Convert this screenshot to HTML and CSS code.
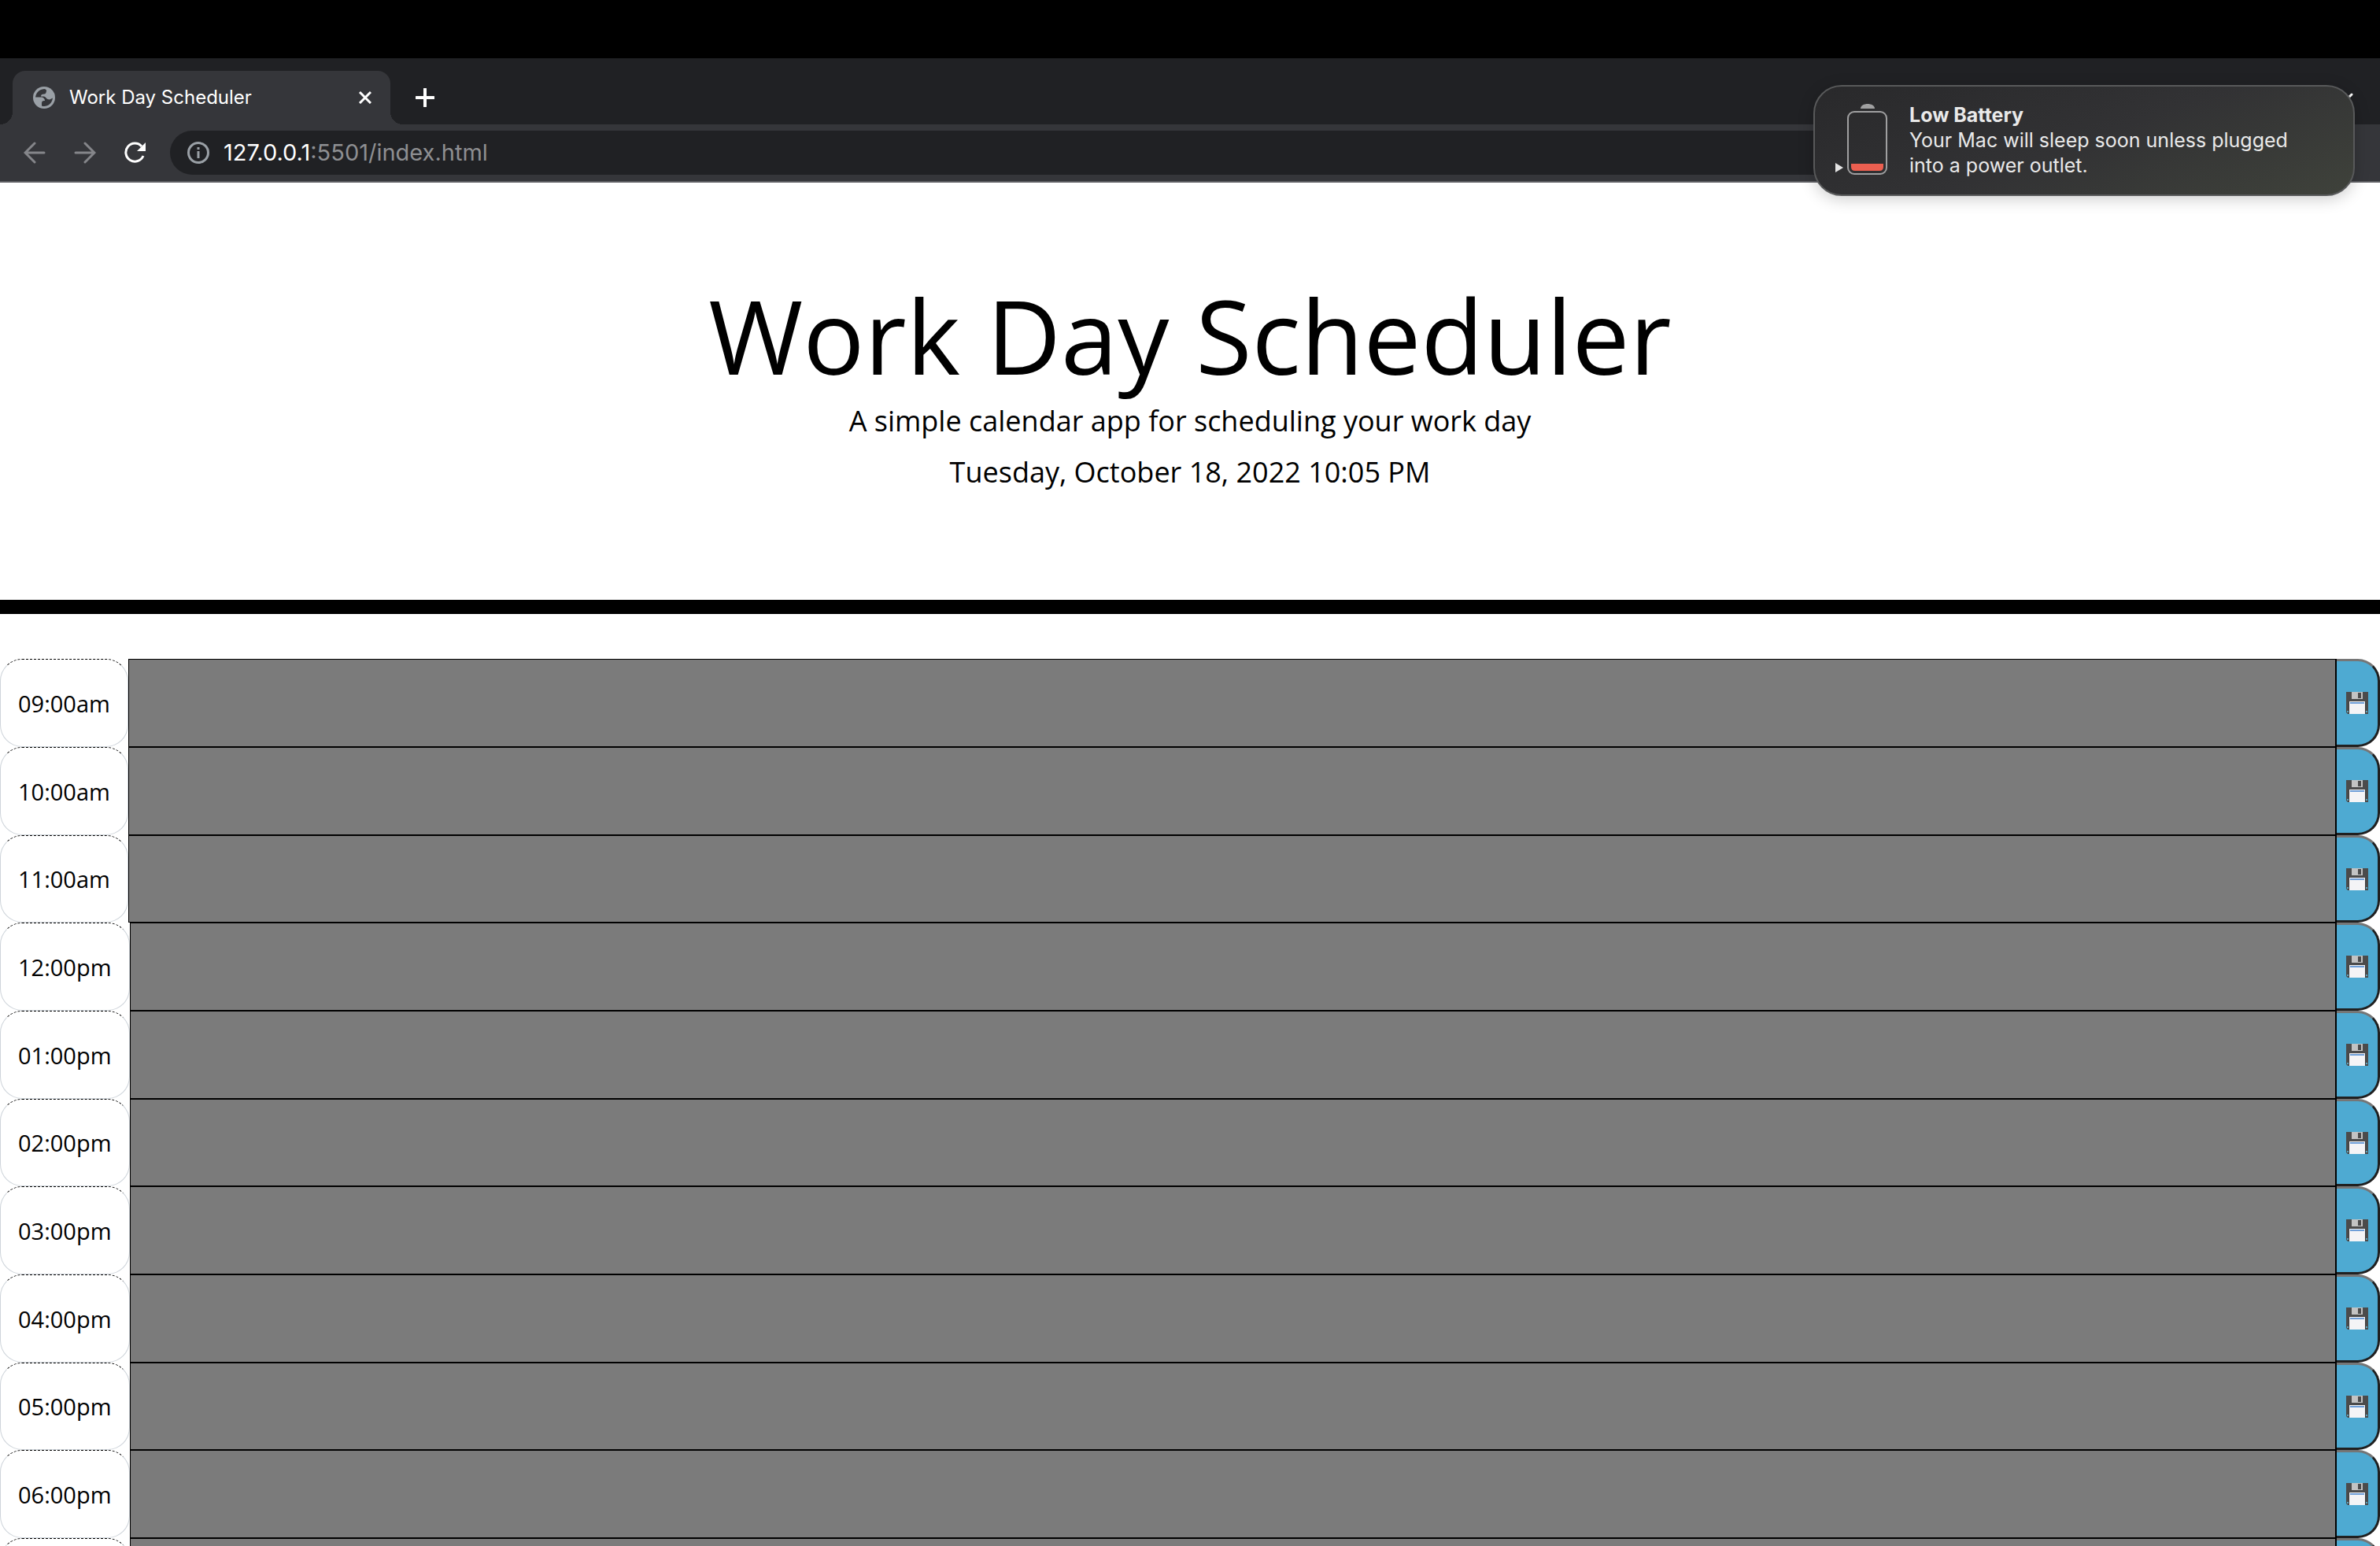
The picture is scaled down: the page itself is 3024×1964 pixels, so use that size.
FILE: index.html
```
<!DOCTYPE html>
<html lang="en">
<head>
<meta charset="utf-8">
<title>Work Day Scheduler</title>
<link rel="stylesheet" href="styles.css">
</head>
<body>
<svg width="0" height="0" class="sprite" aria-hidden="true">
  <symbol id="floppy" viewBox="0 0 28 28">
    <path d="M0 0h28v28H2L0 26z" fill="#4b4b4b"/>
    <path d="M7 0h14v9H7z" fill="#c3c3c3"/>
    <path d="M15 1h4v7h-4z" fill="#4b4b4b"/>
    <path d="M3 12h22v16H3z" fill="#3c3c3c"/>
    <path d="M4 12h20v16H4z" fill="#f4f4f6"/>
    <path d="M5 13h18v2H5z" fill="#6f9fd8"/>
    <path d="M1 24h2v2H1zM25 24h2v2h-2z" fill="#5ba3bd"/>
  </symbol>
</svg>

<header class="browser">
  <div class="menubar"></div>
  <div class="tabstrip">
    <div class="tab">
      <svg class="globe" viewBox="0 0 28 28"><circle cx="14" cy="14" r="14" fill="#9aa0a6"/><path d="M15 3C9 3 4 7 3 13.500h7c3 0 5 2 5 4.500h-1c-2 0-3 1-3 3v3.500c6 2 13-2 14-10l-4 2c-4 0-4-3-7-4h-4c0-2 1-3 4-3 2 0 3-2 3-5z" fill="#35363a"/></svg>
      <span class="tab-title">Work Day Scheduler</span>
      <button class="icon-button" type="button" aria-label="Close tab"><svg width="16" height="16" viewBox="0 0 16 16"><path d="M1 1l14 14M15 1L1 15" stroke="#fff" stroke-width="3"/></svg></button>
    </div>
    <button class="icon-button" type="button" aria-label="New tab"><svg width="24" height="24" viewBox="0 0 24 24"><path d="M12 1v22M1 12h22" stroke="#fff" stroke-width="4" stroke-linecap="round"/></svg></button>
    <button class="icon-button tab-search" type="button" aria-label="Search tabs"><svg width="20" height="12" viewBox="0 0 20 12"><path d="M2 2l8 8 8-8" fill="none" stroke="#fff" stroke-width="3" stroke-linecap="round"/></svg></button>
  </div>
  <div class="toolbar">
    <nav class="nav">
      <button class="icon-button" type="button" aria-label="Back"><svg width="28" height="28" viewBox="0 0 28 28"><path d="M26 14H3M14 2L2 14l12 12" fill="none" stroke="#85868a" stroke-width="3" stroke-linecap="round"/></svg></button>
      <button class="icon-button" type="button" aria-label="Forward"><svg width="28" height="28" viewBox="0 0 28 28"><path d="M2 14h23M14 2l12 12-12 12" fill="none" stroke="#85868a" stroke-width="3" stroke-linecap="round"/></svg></button>
      <button class="icon-button" type="button" aria-label="Reload"><svg width="28" height="28" viewBox="0 0 28 28"><path d="M24 18A11.500 11.500 0 1 1 22 6" fill="none" stroke="#fff" stroke-width="3"/><path d="M27 1v11H16z" fill="#fff"/></svg></button>
    </nav>
    <div class="omnibox">
      <svg width="28" height="28" viewBox="0 0 28 28"><circle cx="14" cy="14" r="12.500" fill="none" stroke="#9aa0a6" stroke-width="3"/><path d="M14 12v9M14 7v3" stroke="#9aa0a6" stroke-width="3"/></svg>
      <label class="address"><span>127.0.0.1</span><input type="text" value=":5501/index.html" aria-label="Address"></label>
    </div>
  </div>
</header>

<aside class="notification">
  <svg class="battery" width="68" height="92" viewBox="0 0 68 92">
    <path d="M32 8c0-8 18-8 18 0z" fill="#a0a0a1"/>
    <rect x="16" y="12" width="49" height="79" rx="8" fill="none" stroke="#a0a0a1" stroke-width="2"/>
    <path d="M20 78h41v4q0 5-5 5H25q-5 0-5-5z" fill="#ec5f50"/>
    <path d="M0 77l10 6-10 6z" fill="#e4e4e4"/>
  </svg>
  <div>
    <strong>Low Battery</strong>
    <p>Your Mac will sleep soon unless plugged into a power outlet.</p>
  </div>
</aside>

<main class="page">
  <section class="jumbotron">
    <h1>Work Day Scheduler</h1>
    <p>A simple calendar app for scheduling your work day</p>
    <p>Tuesday, October 18, 2022 10:05 PM</p>
  </section>
  <section class="schedule">
    <div class="slot"><label for="h9">09:00am</label><textarea id="h9"></textarea><button type="button" aria-label="Save"><svg><use href="#floppy"/></svg></button></div>
    <div class="slot"><label for="h10">10:00am</label><textarea id="h10"></textarea><button type="button" aria-label="Save"><svg><use href="#floppy"/></svg></button></div>
    <div class="slot"><label for="h11">11:00am</label><textarea id="h11"></textarea><button type="button" aria-label="Save"><svg><use href="#floppy"/></svg></button></div>
    <div class="slot"><label for="h12">12:00pm</label><textarea id="h12"></textarea><button type="button" aria-label="Save"><svg><use href="#floppy"/></svg></button></div>
    <div class="slot"><label for="h13">01:00pm</label><textarea id="h13"></textarea><button type="button" aria-label="Save"><svg><use href="#floppy"/></svg></button></div>
    <div class="slot"><label for="h14">02:00pm</label><textarea id="h14"></textarea><button type="button" aria-label="Save"><svg><use href="#floppy"/></svg></button></div>
    <div class="slot"><label for="h15">03:00pm</label><textarea id="h15"></textarea><button type="button" aria-label="Save"><svg><use href="#floppy"/></svg></button></div>
    <div class="slot"><label for="h16">04:00pm</label><textarea id="h16"></textarea><button type="button" aria-label="Save"><svg><use href="#floppy"/></svg></button></div>
    <div class="slot"><label for="h17">05:00pm</label><textarea id="h17"></textarea><button type="button" aria-label="Save"><svg><use href="#floppy"/></svg></button></div>
    <div class="slot"><label for="h18">06:00pm</label><textarea id="h18"></textarea><button type="button" aria-label="Save"><svg><use href="#floppy"/></svg></button></div>
    <div class="slot"><label for="h19"></label><textarea id="h19" aria-label="Evening"></textarea><button type="button" aria-label="Save"></button></div>
  </section>
</main>
</body>
</html>
```
FILE: styles.css
```
* { box-sizing: border-box; }
body {
  margin: 0;
  height: 100vh;
  overflow: hidden;
  display: flex;
  flex-direction: column;
  background: #fff;
  color: #000;
  font-family: "Open Sans", sans-serif;
}
h1, p { margin: 0; }
svg { display: block; flex: none; }
.sprite { position: absolute; }

.browser { flex: none; font-family: Inter, sans-serif; color: #fff; }
.menubar { height: 74px; background: #000; }
.icon-button { padding: 0; border: 0; background: none; }

.tabstrip {
  display: flex;
  align-items: center;
  gap: 32px;
  height: 84px;
  padding: 16px 34px 0 16px;
  background: #202124;
}
.tab {
  position: relative;
  display: flex;
  align-items: center;
  width: 480px;
  height: 68px;
  padding: 0 24px 0 26px;
  border-radius: 16px 16px 0 0;
  background: #35363a;
}
.tab::before, .tab::after {
  content: "";
  position: absolute;
  bottom: 0;
  width: 16px;
  height: 16px;
}
.tab::before { left: -16px; background: radial-gradient(circle at 0 0, #202124 16px, #35363a 16px); }
.tab::after { right: -16px; background: radial-gradient(circle at 100% 0, #202124 16px, #35363a 16px); }
.globe { width: 28px; height: 28px; }
.tab-title { flex: 1; margin-left: 18px; font-size: 24px; line-height: 28px; }
.tab-search { margin-left: auto; }

.toolbar {
  display: flex;
  align-items: center;
  gap: 30px;
  height: 74px;
  padding: 6px 160px 6px 30px;
  background: #35363a;
  border-bottom: 2px solid #5f6064;
}
.nav { display: flex; gap: 36px; }
.omnibox {
  flex: 1;
  display: flex;
  align-items: center;
  gap: 18px;
  height: 56px;
  padding: 0 22px;
  border-radius: 28px;
  background: #202124;
}
.address { flex: 1; display: flex; font-size: 29px; line-height: 36px; }
.address input {
  flex: 1;
  padding: 0;
  border: 0;
  background: none;
  color: #8e8f92;
  font: inherit;
}

.notification {
  position: absolute;
  top: 108px;
  right: 32px;
  display: flex;
  gap: 26px;
  width: 688px;
  height: 141px;
  padding: 20px 60px 20px 26px;
  border: 2px solid #58595a;
  border-radius: 36px;
  background: linear-gradient(160deg, #29292b 0%, #323234 50%, #3f423b 100%);
  box-shadow: 0 4px 20px rgba(0, 0, 0, 0.2);
  color: #e9e9e9;
  font: 25px/32px Inter, sans-serif;
}

.jumbotron {
  height: 548px;
  padding: 114px 32px 0;
  border-bottom: 18px solid #000;
  text-align: center;
}
.jumbotron h1 { margin-bottom: 2px; font-size: 130px; font-weight: 400; line-height: 160px; }
.jumbotron p { margin-bottom: 11px; font-size: 36px; line-height: 54px; }

.schedule { margin-top: 57px; }
.slot { display: flex; height: 112px; }
.slot:nth-child(3n) { height: 111px; }
.slot label {
  display: flex;
  align-items: center;
  min-width: 165px;
  padding: 0 22px;
  border: 1px solid #ced4da;
  border-top: 1px dashed #000;
  border-radius: 28px;
  font-size: 29px;
}
.slot:nth-child(-n+3) label { min-width: 163px; }
.slot textarea {
  flex: 1;
  padding: 12px;
  border: 1px solid #000;
  border-right-width: 2px;
  background: #7b7b7b;
  resize: none;
}
.slot button {
  width: 55px;
  padding: 0 0 0 12px;
  border: 3px solid #202020;
  border-top-color: #767676;
  border-left: 0;
  border-radius: 0 28px 28px 0;
  background: #4eaad2;
}
.slot button svg { width: 28px; height: 28px; }
```
